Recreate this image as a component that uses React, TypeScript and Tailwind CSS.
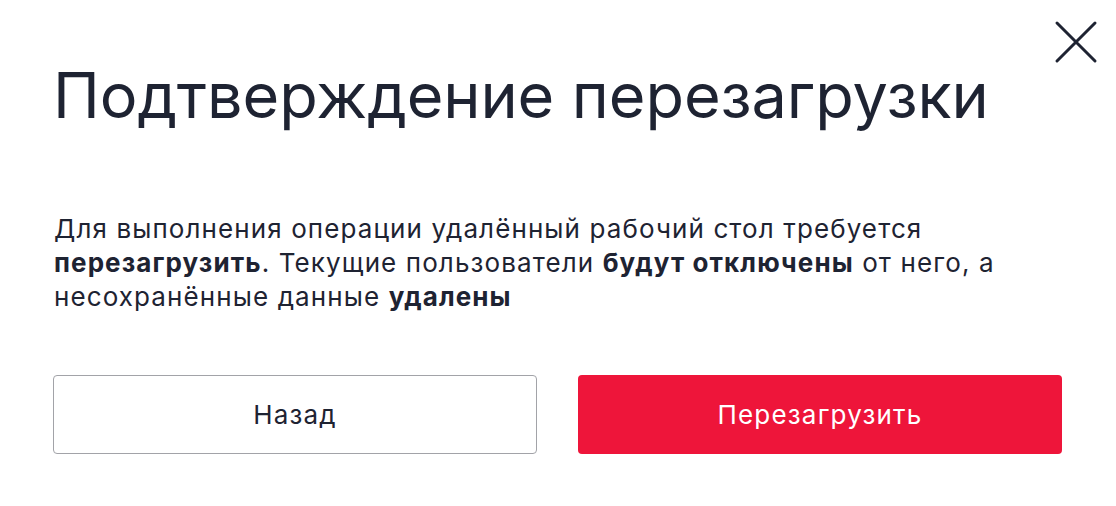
export default function App() {
  return (
    <div className="relative w-[1116px] h-[506px] bg-white text-[#1e2332] font-['Inter',sans-serif] pl-[53px] pr-[54px]">
      <button className="absolute right-[18px] top-[20px] w-[44px] h-[44px] flex items-center justify-center" aria-label="Закрыть">
        <svg width="44" height="44" viewBox="0 0 44 44" fill="none">
          <path d="M3 3 L41 41 M41 3 L3 41" stroke="#1e2332" strokeWidth="3" strokeLinecap="round" />
        </svg>
      </button>

      <h1 className="pt-[56px] text-[63px] leading-[78px] font-normal tracking-[-0.1px]">
        Подтверждение перезагрузки
      </h1>

      <p className="mt-[78px] pl-[1px] text-[26px] leading-[34px] tracking-[1.1px]">
        Для выполнения операции удалённый рабочий стол требуется{' '}
        <b className="font-bold">перезагрузить</b>. Текущие пользователи{' '}
        <b className="font-bold">будут отключены</b> от него, а несохранённые данные{' '}
        <b className="font-bold">удалены</b>
      </p>

      <div className="mt-[61px] grid grid-cols-2 gap-[41px]">
        <button className="h-[79px] rounded-[4px] border border-[#a2a3a8] bg-white text-[26px] tracking-[1.2px] text-[#1e2332]">
          Назад
        </button>
        <button className="h-[79px] rounded-[4px] bg-[#ee153a] text-[26px] tracking-[1.2px] text-white">
          Перезагрузить
        </button>
      </div>
    </div>
  );
}
